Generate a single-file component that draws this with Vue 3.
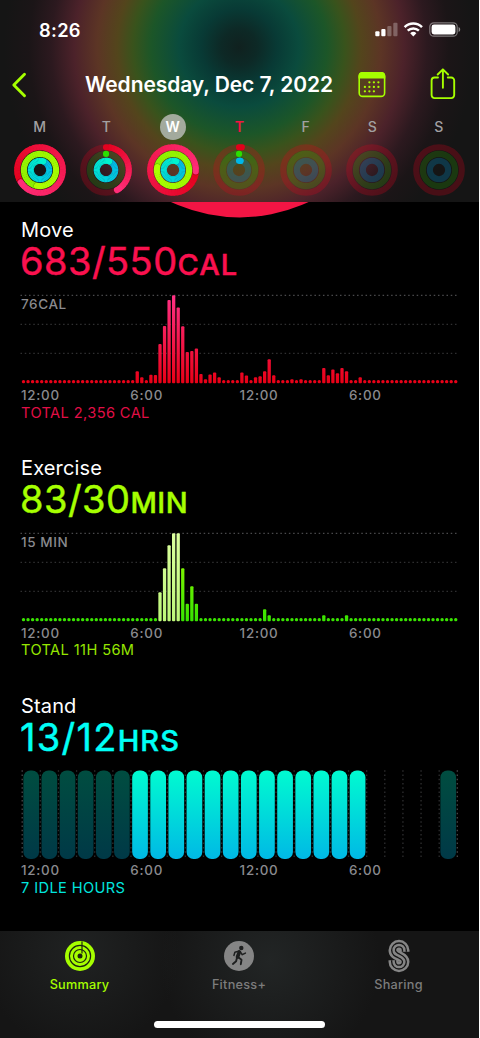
<script setup>
// colours run from the start of a ring to its head
const palette = {
  move: ['#e3001b', '#ff2d78'],
  exercise: ['#8cf000', '#acff00'],
  stand: ['#00b7e8', '#00f2cf'],
}
const radii = { move: 22.8, exercise: 16.1, stand: 9.2 }

const days = [
  { id: 1, label: 'M', move: 1.66, exercise: 1.53, stand: 1.06 },
  { id: 2, label: 'T', move: 0.42, exercise: 0.001, stand: 1.06 },
  { id: 3, label: 'W', move: 1.26, exercise: 1.78, stand: 1.06, selected: true },
  { id: 4, label: 'T', move: 0.02, exercise: 0.001, stand: 0.03, today: true },
  { id: 5, label: 'F', move: 0, exercise: 0, stand: 0 },
  { id: 6, label: 'S', move: 0, exercise: 0, stand: 0 },
  { id: 7, label: 'S', move: 0, exercise: 0, stand: 0 },
]

function mix(a, b, t) {
  const channel = (hex, i) => parseInt(hex.slice(1 + i * 2, 3 + i * 2), 16)
  const rgb = [0, 1, 2].map((i) => Math.round(channel(a, i) + (channel(b, i) - channel(a, i)) * t))
  return `rgb(${rgb.join(',')})`
}

function point(r, turn) {
  const a = turn * Math.PI * 2
  return `${(27 + r * Math.sin(a)).toFixed(2)} ${(27 - r * Math.cos(a)).toFixed(2)}`
}

function slices(day, kind) {
  const amount = day[kind]
  if (!amount) return []
  const r = radii[kind]
  const colors = kind === 'exercise' && amount < 0.1 ? ['#2be000', '#2be000'] : palette[kind]
  const length = Math.min(amount, 1)
  const from = amount - length
  const count = Math.max(1, Math.ceil(length * 48))
  return Array.from({ length: count }, (_, i) => {
    const a = from + (length * i) / count
    const b = from + (length * (i + 1)) / count + (i < count - 1 ? 0.004 : 0)
    const last = i === count - 1
    const first = i === 0 && amount < 1
    return {
      d: `M${point(r, a)}A${r} ${r} 0 0 1 ${point(r, b)}`,
      color: mix(colors[0], colors[1], amount < 0.1 ? 0 : (i + 1) / count),
      cap: last || first ? 'round' : 'butt',
      last: last && amount > 1,
    }
  })
}

const kinds = ['move', 'exercise', 'stand']

function bars(values) {
  return Array.from({ length: 96 }, (_, i) => ({
    x: 21.85 + i * 4.55,
    h: values[i] ?? 3.2,
    i,
  }))
}

const moveBars = bars({
  25: 12, 26: 6, 28: 8.5, 29: 8.3, 30: 39.3, 31: 57.3, 32: 83.3, 33: 88, 34: 75.7,
  35: 57, 36: 31.3, 37: 32.3, 38: 34.7, 39: 9.3, 40: 4, 41: 8.7, 42: 10.7, 43: 6,
  48: 10.8, 49: 7.8, 50: 3.4, 51: 6, 52: 7, 53: 12, 54: 24, 55: 8, 59: 4, 61: 4,
  66: 15.3, 67: 8, 68: 13.7, 69: 10, 70: 15.3, 71: 12, 74: 6,
})
const exerciseBars = bars({
  30: 29, 31: 53, 32: 76, 33: 88, 34: 88, 35: 53, 36: 17.5, 37: 35, 38: 17.5,
  53: 12, 54: 6, 66: 6, 71: 6,
})

const sections = [
  { id: 'move', title: 'Move', value: '683/550', unit: 'CAL', max: '76CAL', total: 'TOTAL 2,356 CAL', bars: moveBars },
  { id: 'exercise', title: 'Exercise', value: '83/30', unit: 'MIN', max: '15 MIN', total: 'TOTAL 11H 56M', bars: exerciseBars },
  { id: 'stand', title: 'Stand', value: '13/12', unit: 'HRS', total: '7 IDLE HOURS' },
]

const hours = Array.from({ length: 24 }, (_, i) => ({
  x: 23.4 + i * 18.13,
  state: i < 6 || i === 23 ? 'idle' : i < 19 ? 'stood' : 'none',
}))

const ticks = ['12:00', '6:00', '12:00', '6:00']

function barFill(section, bar) {
  if (section.id === 'move') return 'url(#moveFill)'
  return bar.i >= 30 && bar.i <= 34 ? 'url(#paleFill)' : 'url(#exerciseFill)'
}
</script>

<template>
  <div class="phone">
    <header class="header">
      <div class="status">
        <span class="time">8:26</span>
        <svg class="status-icons" width="88" height="20" viewBox="0 0 88 20" fill="#fff">
          <rect x="0.3" y="11.2" width="4.2" height="5" rx="1" />
          <rect x="6.3" y="9" width="4.2" height="7.2" rx="1" />
          <rect x="12.3" y="6" width="4.2" height="10.2" rx="1" opacity=".28" />
          <rect x="18.3" y="2.8" width="4.2" height="13.4" rx="1" opacity=".28" />
          <g fill="none" stroke="#fff" stroke-width="2.5">
            <path d="M29.6 7.1a12.6 12.6 0 0 1 17.4 0" />
            <path d="M32.7 10.6a8.2 8.2 0 0 1 11.2 0" />
          </g>
          <path d="M35.2 13.2a4.6 4.6 0 0 1 6.2 0l-3.1 3.2z" />
          <rect x="54.8" y="2.8" width="27.4" height="13.4" rx="4" fill="none" stroke="#fff" stroke-opacity=".42" stroke-width="1.2" />
          <rect x="56.6" y="4.6" width="23.8" height="9.8" rx="2.4" />
          <path d="M83.6 7v5c1.1-.5 1.6-1.4 1.6-2.5S84.7 7.5 83.6 7z" opacity=".5" />
        </svg>
      </div>

      <div class="nav">
        <svg class="back" width="16" height="26" viewBox="0 0 16 26">
          <path d="M13.5 2.2L2.8 13l10.7 10.8" fill="none" stroke="#a6ff00" stroke-width="2.9" stroke-linecap="round" stroke-linejoin="round" />
        </svg>
        <h1 class="date">Wednesday, Dec 7, 2022</h1>
        <svg class="calendar" width="28" height="28" viewBox="0 0 28 28">
          <rect x="1.2" y="1.8" width="25.4" height="23.6" rx="3.5" fill="none" stroke="#a6ff00" stroke-width="1.6" />
          <path d="M.5 7.5V5A4 4 0 0 1 4.5 1h18.8a4 4 0 0 1 4 4v2.5z" fill="#a6ff00" />
          <g fill="#a6ff00">
            <circle v-for="x in [11.4, 15.9, 20.4]" :key="'a' + x" :cx="x" cy="11.3" r="1.15" />
            <circle v-for="x in [6.9, 11.4, 15.9, 20.4]" :key="'b' + x" :cx="x" cy="15.9" r="1.15" />
            <circle v-for="x in [6.9, 11.4, 15.9]" :key="'c' + x" :cx="x" cy="20.3" r="1.15" />
          </g>
        </svg>
        <svg class="share" width="26" height="32" viewBox="0 0 26 32" fill="none" stroke="#a6ff00" stroke-width="1.9" stroke-linecap="round" stroke-linejoin="round">
          <path d="M8 9.5H4.6a3 3 0 0 0-3 3v14.6a3 3 0 0 0 3 3h16.6a3 3 0 0 0 3-3V12.5a3 3 0 0 0-3-3H17.8" />
          <path d="M12.9 19.8V1.5M7.7 6.5l5.2-5.2 5.2 5.2" />
        </svg>
      </div>

      <div class="week">
        <div v-for="day in days" :key="day.id" class="day">
          <span class="day-label" :class="{ selected: day.selected, today: day.today }">{{ day.label }}</span>
          <svg width="54" height="54" viewBox="0 0 54 54" fill="none" stroke-width="6.1">
            <circle cx="27" cy="27" r="22.8" stroke="#e3001b" stroke-opacity=".25" />
            <circle cx="27" cy="27" r="16.1" stroke="#30c800" stroke-opacity=".2" />
            <circle cx="27" cy="27" r="9.2" stroke="#0090c8" stroke-opacity=".28" />
            <g v-for="kind in kinds" :key="kind">
              <template v-for="(s, i) in slices(day, kind)" :key="i">
                <path v-if="s.last" :d="s.d" stroke="#000" stroke-opacity=".25" stroke-linecap="round" transform="rotate(2 27 27)" />
                <path :d="s.d" :stroke="s.color" :stroke-linecap="s.cap" />
              </template>
            </g>
          </svg>
        </div>
      </div>
    </header>

    <main class="content">
      <svg class="ring-edge" width="479" height="16" viewBox="0 0 479 16">
        <circle cx="239.8" cy="-146.2" r="161.6" fill="#f31544" />
      </svg>

      <section v-for="section in sections" :key="section.id" class="section" :class="section.id">
        <h2 class="title">{{ section.title }}</h2>
        <p class="value">{{ section.value }}<span class="unit">{{ section.unit }}</span></p>

        <div class="chart">
          <svg v-if="section.bars" width="479" height="96" viewBox="0 0 479 96">
            <defs>
              <linearGradient id="moveFill" gradientUnits="userSpaceOnUse" x1="0" y1="5" x2="0" y2="93">
                <stop offset="0" stop-color="#ff3185" />
                <stop offset="1" stop-color="#e90016" />
              </linearGradient>
              <linearGradient id="exerciseFill" gradientUnits="userSpaceOnUse" x1="0" y1="5" x2="0" y2="93">
                <stop offset="0" stop-color="#a8ff00" />
                <stop offset="1" stop-color="#37e300" />
              </linearGradient>
              <linearGradient id="paleFill" gradientUnits="userSpaceOnUse" x1="0" y1="5" x2="0" y2="93">
                <stop offset="0" stop-color="#dcff9e" />
                <stop offset="1" stop-color="#bdf779" />
              </linearGradient>
            </defs>
            <g stroke="#4a4a4c" stroke-width="1.2" stroke-dasharray="1.5 2.76">
              <path d="M20.5 5.3H457" />
              <path d="M20.5 34.3H457" opacity=".65" />
              <path d="M20.5 63.3H457" opacity=".65" />
            </g>
            <rect
              v-for="bar in section.bars"
              :key="bar.i"
              :x="bar.x"
              :y="93.3 - bar.h"
              width="3.3"
              :height="bar.h"
              :rx="bar.h < 3.5 ? 1.5 : 1"
              :fill="barFill(section, bar)"
            />
          </svg>
          <svg v-else width="479" height="96" viewBox="0 0 479 96">
            <defs>
              <linearGradient id="stoodFill" x1="0" y1="0" x2="0" y2="1">
                <stop offset="0" stop-color="#00fbd0" />
                <stop offset="1" stop-color="#00b9e5" />
              </linearGradient>
              <linearGradient id="idleFill" x1="0" y1="0" x2="0" y2="1">
                <stop offset="0" stop-color="#004d40" />
                <stop offset="1" stop-color="#003947" />
              </linearGradient>
            </defs>
            <path
              v-for="n in 25"
              :key="n"
              :d="`M${22.2 + (n - 1) * 18.13} 5.2V93`"
              stroke="#48484a"
              stroke-width="1.3"
              stroke-dasharray="1.5 2.76"
              :opacity="n === 1 || n === 25 ? 1 : 0.65"
            />
            <template v-for="hour in hours" :key="hour.x">
              <rect
                v-if="hour.state !== 'none'"
                :x="hour.x"
                y="5.4"
                width="15.7"
                height="88.6"
                rx="7"
                :fill="hour.state === 'stood' ? 'url(#stoodFill)' : 'url(#idleFill)'"
              />
            </template>
          </svg>
          <span v-if="section.max" class="max">{{ section.max }}</span>
        </div>

        <div class="axis">
          <span v-for="(tick, i) in ticks" :key="i">{{ tick }}</span>
        </div>
        <p class="total">{{ section.total }}</p>
      </section>
    </main>

    <footer class="tabs">
      <nav class="tab-row">
        <a class="tab active">
          <svg width="34" height="34" viewBox="0 0 34 34">
            <circle cx="17" cy="17" r="15" fill="#a6ff00" />
            <g fill="none" stroke="#1c2410" stroke-width="1.2">
              <circle cx="17" cy="17" r="10.6" />
              <circle cx="17" cy="17" r="6.5" />
            </g>
            <circle cx="17" cy="17" r="2.5" fill="#1c2410" />
            <path d="M19 2.5V14.5" stroke="#1c2410" stroke-width="1.2" />
          </svg>
          <span>Summary</span>
        </a>
        <a class="tab">
          <svg width="34" height="34" viewBox="0 0 34 34">
            <circle cx="17" cy="17" r="15" fill="#858585" />
            <circle cx="19.3" cy="9" r="2.2" fill="#1e1f1f" />
            <g fill="none" stroke="#1e1f1f" stroke-linecap="round" stroke-linejoin="round">
              <path d="M17.4 12.9L15.5 18" stroke-width="3.6" />
              <path d="M16.5 12.3L12.9 13.3 11.9 16.4M18.3 12.9L20.3 15.7 23.4 14.1" stroke-width="1.5" />
              <path d="M16.3 18.3L19.5 20.8 18.8 25.2M15 18.6L14.1 22.3 10.9 25" stroke-width="1.9" />
            </g>
          </svg>
          <span>Fitness+</span>
        </a>
        <a class="tab">
          <svg width="34" height="34" viewBox="-6.5 -0.5 34 34" fill="none">
            <g v-for="line in [['#858585', 10.2], ['#161616', 5.2], ['#858585', 2.5]]" :key="line[1]" :stroke="line[0]" :stroke-width="line[1]">
              <path d="M15.9 12.3V10.8A5.4 5.4 0 0 0 5.1 10.8C5.1 14 7.3 15 10.5 16.5S15.9 19.3 15.9 22.2A5.4 5.4 0 0 1 5.1 22.2V20.7" />
            </g>
          </svg>
          <span>Sharing</span>
        </a>
      </nav>
      <div class="home-bar"></div>
    </footer>
  </div>
</template>

<style>
body {
  margin: 0;
  background: #fff;
}
</style>

<style scoped>
.phone {
  width: 479px;
  height: 1038px;
  display: flex;
  flex-direction: column;
  background: #000;
  color: #fff;
  font-family: Inter, "Liberation Sans", sans-serif;
  overflow: hidden;
}
h1, h2, p { margin: 0; font-weight: 400; }
svg { display: block; flex-shrink: 0; }

.header {
  height: 202.3px;
  flex-shrink: 0;
  background: radial-gradient(
    circle at 239px 47px,
    #10211f 0,
    #0d2926 18px,
    #083a35 38px,
    #0a4b3d 60px,
    #1c5628 88px,
    #39531c 106px,
    #53451c 122px,
    #5c3525 142px,
    #4c222a 165px,
    #2c191f 188px,
    #1b1517 210px,
    #151515 235px
  );
}

.status {
  display: flex;
  justify-content: space-between;
  align-items: center;
  height: 59px;
  padding: 0 19px 0 39px;
  box-sizing: border-box;
}
.time {
  font-size: 18.3px;
  font-weight: 600;
  letter-spacing: 0.3px;
}
.status-icons { margin-right: -3px; }

.nav {
  display: flex;
  align-items: center;
  height: 51px;
  padding-left: 11px;
}
.date {
  width: 248px;
  margin-left: 58px;
  font-size: 21px;
  font-weight: 600;
  letter-spacing: -0.08px;
  white-space: nowrap;
}
.calendar { margin-left: 25px; }
.share { margin: -1.5px 0 0 44px; }

.week {
  display: grid;
  grid-template-columns: repeat(7, 66.5px);
  padding: 3.5px 0 0 6.5px;
}
.day {
  display: flex;
  flex-direction: column;
  align-items: center;
  gap: 3.5px;
}
.day-label {
  width: 26px;
  height: 26px;
  line-height: 26px;
  border-radius: 50%;
  text-align: center;
  font-size: 14px;
  font-weight: 500;
  color: #a2a0a2;
}
.day-label.selected {
  background: #a3aa9d;
  color: #fff;
  font-weight: 600;
}
.day-label.today {
  color: #f5143f;
  font-weight: 600;
}
.day svg { margin-top: -0.5px; }

.content {
  flex: 1;
  min-height: 0;
}
.section {
  height: 237.7px;
}
.title {
  padding-left: 21px;
  font-size: 20px;
  line-height: 24px;
  letter-spacing: 0.15px;
}
.value {
  height: 38px;
  padding-left: 20px;
  font-size: 38px;
  line-height: 38px;
  letter-spacing: 0.45px;
  -webkit-text-stroke: 0.45px currentColor;
}
.unit {
  font-size: 29px;
  line-height: 0;
  font-weight: 500;
  letter-spacing: 1px;
}
.move .value, .move .total { color: #fa114f; }
.exercise .value, .exercise .total { color: #a6ff00; }
.stand .value, .stand .total { color: #00fff6; }
.stand .value { letter-spacing: 1.3px; }
.exercise .unit { letter-spacing: 0.5px; }

.chart {
  position: relative;
  margin-top: 9.7px;
}
.max {
  position: absolute;
  left: 21px;
  top: 6px;
  font-size: 13.5px;
  line-height: 17px;
  font-weight: 500;
  letter-spacing: 0.6px;
  color: #8a8a8e;
}
.axis {
  display: grid;
  grid-template-columns: repeat(4, 109.3px);
  padding-left: 21px;
  margin-top: 1px;
  font-size: 13.4px;
  line-height: 16px;
  font-weight: 500;
  letter-spacing: 0.75px;
  color: #8a8a8e;
}
.total {
  margin-top: 0.8px;
  padding-left: 21px;
  font-size: 14.6px;
  line-height: 19px;
  letter-spacing: 0.4px;
  opacity: 0.9;
}

.tabs {
  height: 107px;
  flex-shrink: 0;
  display: flex;
  flex-direction: column;
  align-items: center;
  background:
    radial-gradient(circle at 80px 20px, #202222 0, transparent 100px),
    radial-gradient(circle at 270px 30px, #222525 0, transparent 110px),
    #151515;
}
.tab-row {
  display: grid;
  grid-template-columns: repeat(3, 159.5px);
  height: 90px;
  margin-right: 1px;
}
.tab {
  display: flex;
  flex-direction: column;
  align-items: center;
  padding-top: 7.5px;
  font-size: 12.7px;
  line-height: 16px;
  font-weight: 500;
  letter-spacing: 0.25px;
  color: #7c7c7c;
}
.tab span { margin-top: 4.5px; }
.tab.active { color: #a6ff00; }
.home-bar {
  width: 171px;
  height: 6.5px;
  border-radius: 4px;
  background: #fff;
}
</style>
